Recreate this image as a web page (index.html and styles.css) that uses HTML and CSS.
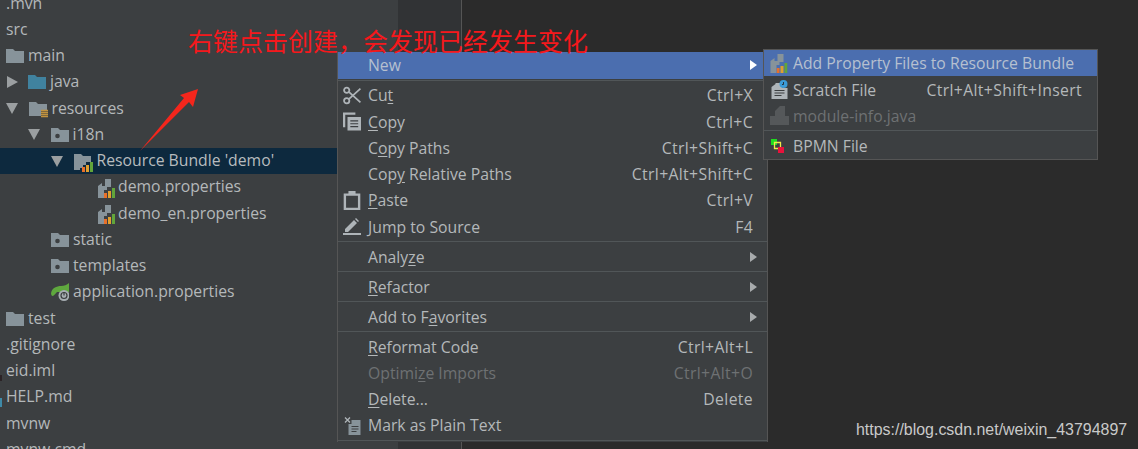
FILE: index.html
```html
<!DOCTYPE html>
<html lang="en">
<head>
<meta charset="utf-8">
<title>Resource Bundle</title>
<link rel="stylesheet" href="styles.css">
</head>
<body>
<svg class="defs" width="0" height="0">
  <symbol id="folder" viewBox="0 0 18 14"><path d="M0 0h7l2 2h9v12H0z" fill="#87939a"/></symbol>
  <symbol id="folder-blue" viewBox="0 0 18 14"><path d="M0 0h7l2 2h9v12H0z" fill="#40829f"/></symbol>
  <symbol id="folder-res" viewBox="0 0 19 16"><path d="M0 0h7l2 2h9v6h-6v6H0z" fill="#87939a"/><path d="M12 8.500h7M12 10.500h7M12 12.500h7M12 14.500h7" stroke="#c2933f" stroke-width="1.300"/></symbol>
  <symbol id="folder-dot" viewBox="0 0 18 14"><path d="M0 0h7l2 2h9v12H0z" fill="#87939a"/><circle cx="6.500" cy="8" r="2.300" fill="#3c3f41"/></symbol>
  <symbol id="bars" viewBox="0 0 11 10"><path d="M0 5h3v5H0z" fill="#e8702a"/><path d="M4 3h3v7H4z" fill="#e0a030"/><path d="M8 0h3v10H8z" fill="#62a53a"/></symbol>
  <symbol id="bundle-ico" viewBox="0 0 19 18"><path d="M0 0h7l2 2h8v6h-5v3H9v3H6v2H0z" fill="#87939a"/><use href="#bars" x="8" y="8" width="11" height="10"/></symbol>
  <symbol id="prop-ico" viewBox="0 0 17 19"><path d="M7 0h6v8H9v3H6v8H0V7l4-3v3h3z" fill="#87939a"/><use href="#bars" x="6" y="9" width="11" height="10"/></symbol>
  <symbol id="spring" viewBox="0 0 18 18"><path d="M0 11C0 5 6 3 10 3c3 0 6-1 8-3v9H6c-2 2-3 4-5 4z" fill="#5fa83e"/><circle cx="13" cy="12.500" r="5.500" fill="#a6adb1"/><circle cx="13" cy="12.500" r="3" fill="none" stroke="#3c3f41" stroke-width="1.200"/><path d="M13 9v3.500" stroke="#3c3f41" stroke-width="1.200"/></symbol>
  <symbol id="cut" viewBox="0 0 17 17"><g fill="none" stroke="#aeb4b8" stroke-width="1.700"><circle cx="3.500" cy="3.500" r="2.500"/><circle cx="3.500" cy="13.500" r="2.500"/><path d="M5.500 5l11 10M5.500 12l11-10"/></g></symbol>
  <symbol id="copy" viewBox="0 0 16 16"><path d="M0 0h11v2H2v11H0z" fill="#aeb4b8"/><path d="M4 4h12v12H4z" fill="#aeb4b8"/><path d="M6.500 7.500h7M6.500 10h7M6.500 12.500h7" stroke="#3c3f41" stroke-width="1.100"/></symbol>
  <symbol id="paste" viewBox="0 0 14 16"><path d="M0 2h4V0h6v2h4v14H0zM2 4v10h10V4z" fill="#aeb4b8"/></symbol>
  <symbol id="jump" viewBox="0 0 18 17"><path d="M2 11L11 2l3 3-9 9H2zM12 1l1-1 3 3-1 1z" fill="#aeb4b8"/><path d="M0 15h18v2H0z" fill="#aeb4b8"/></symbol>
  <symbol id="plain" viewBox="0 0 17 19"><path d="M5 4h12v15H5z" fill="#87939a"/><path d="M0 0h8v8H0z" fill="#3c3f41"/><path d="M1.500 1.500l5 5M6.500 1.500l-5 5" stroke="#aeb4b8" stroke-width="1.300"/><path d="M8 10.500h7M8 13h7M8 15.500h5" stroke="#3c3f41" stroke-width="1"/></symbol>
  <symbol id="scratch" viewBox="0 0 16 19"><path d="M4 3h7v5h5v11H0V7l4-3z" fill="#aeb4b8"/><path d="M3 10.500h10M3 13h10M3 15.500h7" stroke="#3c3f41" stroke-width="1.100"/><circle cx="12" cy="4" r="4" fill="#3a9bd8"/><path d="M12 2v2.500h-1.500" fill="none" stroke="#26343f" stroke-width="1"/></symbol>
  <symbol id="module" viewBox="0 0 19 19"><path d="M5 5l5-5h5v10H5z" fill="#55585a"/><path d="M0 10h19v9H0z" fill="#55585a"/></symbol>
  <symbol id="bpmn" viewBox="0 0 13 14"><path d="M0 0h6v6H0z" fill="#1fdc1f"/><path d="M3.500 3.500h6v6h-6z" fill="none" stroke="#f2e84a" stroke-width="1.300"/><path d="M7 8h6v6H7z" fill="#e8123c"/></symbol>
</svg>

<div class="page">
  <div class="tree">
    <div class="row l0"><span class="name">.mvn</span></div>
    <div class="row l0"><span class="name">src</span></div>
    <div class="row l0"><svg class="ico"><use href="#folder"/></svg><span class="name">main</span></div>
    <div class="row l0"><span class="tw right"></span><svg class="ico"><use href="#folder-blue"/></svg><span class="name">java</span></div>
    <div class="row l0"><span class="tw down"></span><svg class="ico res"><use href="#folder-res"/></svg><span class="name">resources</span></div>
    <div class="row l1"><span class="tw down"></span><svg class="ico"><use href="#folder-dot"/></svg><span class="name">i18n</span></div>
    <div class="row l2 selected"><span class="tw down"></span><svg class="ico wide"><use href="#bundle-ico"/></svg><span class="name">Resource Bundle 'demo'</span></div>
    <div class="row l4"><svg class="ico prop"><use href="#prop-ico"/></svg><span class="name">demo.properties</span></div>
    <div class="row l4"><svg class="ico prop"><use href="#prop-ico"/></svg><span class="name">demo_en.properties</span></div>
    <div class="row l2"><svg class="ico"><use href="#folder-dot"/></svg><span class="name">static</span></div>
    <div class="row l2"><svg class="ico"><use href="#folder-dot"/></svg><span class="name">templates</span></div>
    <div class="row l2"><svg class="ico leaf"><use href="#spring"/></svg><span class="name">application.properties</span></div>
    <div class="row l0"><svg class="ico"><use href="#folder"/></svg><span class="name">test</span></div>
    <div class="row l0"><span class="name">.gitignore</span></div>
    <div class="row l0"><span class="name">eid.iml</span></div>
    <div class="row l0"><span class="name">HELP.md</span></div>
    <div class="row l0"><span class="name">mvnw</span></div>
    <div class="row l0"><span class="name">mvnw.cmd</span></div>
  </div>
  <div class="gutter"></div>
  <div class="editor"></div>
</div>

<div class="menu main-menu">
  <div class="item active"><span class="mi"></span><span class="label">New</span><span class="sub-arrow lit"></span></div>
  <div class="sep"></div>
  <div class="item"><span class="mi"><svg class="mico"><use href="#cut"/></svg></span><span class="label">Cu<u>t</u></span><span class="keys">Ctrl+X</span></div>
  <div class="item"><span class="mi"><svg class="mico"><use href="#copy"/></svg></span><span class="label"><u>C</u>opy</span><span class="keys">Ctrl+C</span></div>
  <div class="item"><span class="mi"></span><span class="label">C<u>o</u>py Paths</span><span class="keys">Ctrl+Shift+C</span></div>
  <div class="item"><span class="mi"></span><span class="label">Cop<u>y</u> Relative Paths</span><span class="keys">Ctrl+Alt+Shift+C</span></div>
  <div class="item"><span class="mi"><svg class="mico"><use href="#paste"/></svg></span><span class="label"><u>P</u>aste</span><span class="keys">Ctrl+V</span></div>
  <div class="item"><span class="mi"><svg class="mico"><use href="#jump"/></svg></span><span class="label">Jump to Source</span><span class="keys">F4</span></div>
  <div class="sep"></div>
  <div class="item"><span class="mi"></span><span class="label">Analy<u>z</u>e</span><span class="sub-arrow"></span></div>
  <div class="sep"></div>
  <div class="item"><span class="mi"></span><span class="label"><u>R</u>efactor</span><span class="sub-arrow"></span></div>
  <div class="sep"></div>
  <div class="item"><span class="mi"></span><span class="label">Add to F<u>a</u>vorites</span><span class="sub-arrow"></span></div>
  <div class="sep"></div>
  <div class="item"><span class="mi"></span><span class="label"><u>R</u>eformat Code</span><span class="keys">Ctrl+Alt+L</span></div>
  <div class="item off"><span class="mi"></span><span class="label">Optimi<u>z</u>e Imports</span><span class="keys">Ctrl+Alt+O</span></div>
  <div class="item"><span class="mi"></span><span class="label"><u>D</u>elete...</span><span class="keys">Delete</span></div>
  <div class="item"><span class="mi"><svg class="mico"><use href="#plain"/></svg></span><span class="label">Mark as Plain Text</span></div>
  <div class="sep"></div>
</div>

<div class="menu sub-menu">
  <div class="item active"><span class="mi"><svg class="mico"><use href="#prop-ico"/></svg></span><span class="label">Add Property Files to Resource Bundle</span></div>
  <div class="item"><span class="mi"><svg class="mico tall"><use href="#scratch"/></svg></span><span class="label">Scratch File</span><span class="keys">Ctrl+Alt+Shift+Insert</span></div>
  <div class="item off"><span class="mi"><svg class="mico tall"><use href="#module"/></svg></span><span class="label">module-info.java</span></div>
  <div class="sep"></div>
  <div class="item"><span class="mi"><svg class="mico small"><use href="#bpmn"/></svg></span><span class="label">BPMN File</span></div>
</div>

<div class="note">右键点击创建，会发现已经发生变化</div>
<svg class="pointer" width="60" height="62" viewBox="0 0 60 62"><path d="M-1 62L43 9 39 6 57 0 52 18 48 13z" fill="#f4261c"/></svg>

<div class="mark mark-dark"></div>
<div class="mark mark-blue"></div>
<div class="watermark">https://blog.csdn.net/weixin_43794897</div>
</body>
</html>
```

FILE: styles.css
```css
* { box-sizing: border-box; }

html, body {
  margin: 0;
  height: 449px;
  overflow: hidden;
  background: #2b2b2b;
}

body {
  position: relative;
  font-family: "Open Sans", "Noto Sans", sans-serif;
  font-size: 15.750px;
  color: #b4b8ba;
}

.defs { position: absolute; }

.page {
  display: flex;
  height: 449px;
  overflow: hidden;
}

.tree {
  width: 398px;
  flex: none;
  background: #3c3f41;
}

.tree .row:first-child { margin-top: -9.600px; }

.gutter {
  width: 64px;
  flex: none;
  background: #313335;
  border-right: 1px solid #555;
}

.editor {
  flex: 1;
  background: #2b2b2b;
}

.row {
  display: flex;
  align-items: center;
  height: 26.250px;
  white-space: nowrap;
}

.row.selected {
  background: #0d293e;
  color: #b7bcbf;
}

.l0 { padding-left: 6px; }
.l1 { padding-left: 28px; }
.l2 { padding-left: 51px; }
.l3 { padding-left: 73px; }
.l4 { padding-left: 98px; }

.tw {
  flex: none;
  display: block;
  width: 0;
  height: 0;
  border-style: solid;
}

.tw.right {
  border-width: 6.500px 0 6.500px 11px;
  border-color: transparent transparent transparent #9b9fa1;
  margin-left: 1px;
  margin-right: 10px;
}

.tw.down {
  border-width: 11px 6px 0 6px;
  border-color: #9b9fa1 transparent transparent transparent;
  margin-right: 10.500px;
}

.ico {
  width: 18px;
  height: 14px;
  flex: none;
  margin-right: 4px;
  overflow: visible;
}

.ico.res { width: 19px; height: 16px; margin-right: 4px; margin-top: 2px; }
.ico.wide { width: 19px; height: 18px; margin-right: 4px; margin-top: 3px; }
.ico.prop { width: 17px; height: 19px; margin-right: 3px; margin-top: 2px; }
.ico.leaf { width: 18px; height: 18px; margin-right: 4px; }

.name { display: block; margin-bottom: 2px; }

.note {
  position: absolute;
  left: 188px;
  top: 22px;
  font-family: "Noto Sans CJK SC", sans-serif;
  font-size: 25px;
  line-height: 36px;
  color: #f5181c;
  white-space: nowrap;
}

.pointer {
  position: absolute;
  left: 141px;
  top: 89px;
  overflow: visible;
}

.menu {
  position: absolute;
  background: #3c3f41;
  color: #b4b8ba;
}

.main-menu {
  left: 337px;
  top: 52.300px;
  width: 431px;
  border-right: 1px solid #555;
  border-left: 1px solid #555;
}

.sub-menu {
  left: 763px;
  top: 49.200px;
  width: 335px;
  border: 1px solid #555;
}

.item {
  display: flex;
  align-items: center;
  height: 26.250px;
  white-space: nowrap;
}

.item.active { background: #4b6eaf; color: #b6c0d0; }
.item.off { color: #6e7173; }

.mi {
  width: 30px;
  flex: none;
  display: flex;
  align-items: center;
  padding-left: 5px;
}

.sub-menu .mi { width: 29px; padding-left: 6px; }

.mico { display: block; width: 18px; height: 19px; }
.mico.tall { width: 19px; height: 19px; }
.mico.small { width: 13px; height: 14px; margin-left: 1px; }

.label { flex: 1; }
.label u { text-underline-offset: 2px; }

.keys { margin-right: 14px; letter-spacing: 0.350px; }
.sub-menu .keys { margin-right: 15px; }

.sub-arrow {
  width: 0;
  height: 0;
  border-style: solid;
  border-width: 5px 0 5px 7px;
  border-color: transparent transparent transparent #a8abad;
  margin-right: 10px;
}

.sub-arrow.lit { border-left-color: #fff; }

.sep {
  height: 1px;
  margin: 1.375px 0;
  background: #515658;
}

.mark {
  position: absolute;
  left: 0;
  width: 2px;
}

.mark-dark { top: 375px; height: 6px; background: #2b2326; }
.mark-blue { top: 398px; height: 9px; background: #3f8aa8; }

.watermark {
  position: absolute;
  left: 856px;
  top: 421px;
  font-family: "Liberation Sans", Arial, sans-serif;
  font-size: 15.950px;
  line-height: 18px;
  color: #c9c9c9;
  white-space: nowrap;
}
```
